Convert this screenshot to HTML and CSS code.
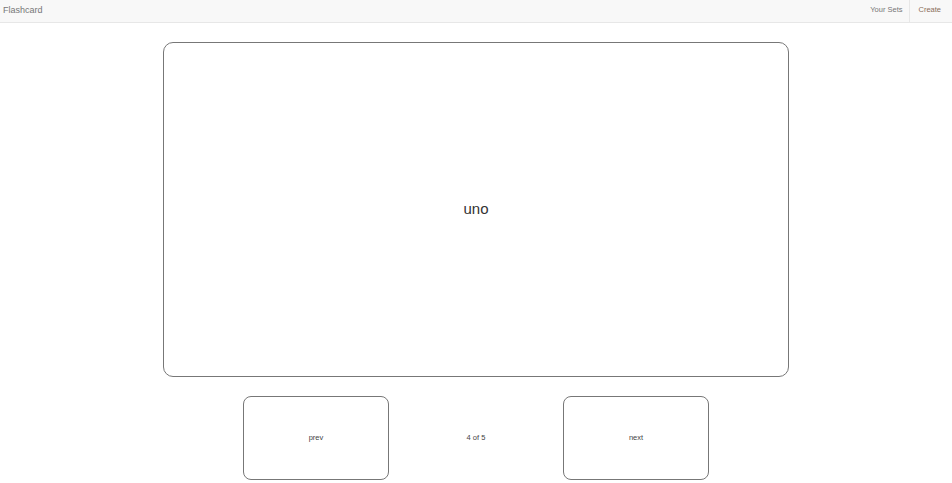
FILE: index.html
```html
<!DOCTYPE html>
<html>
<head>
<meta charset="utf-8">
<title>Flashcard</title>
<link rel="stylesheet" href="styles.css">
</head>
<body>
<nav class="navbar">
  <a class="brand" href="#">Flashcard</a>
  <ul class="nav">
    <li><a href="#">Your Sets</a></li>
    <li class="active"><a href="#">Create</a></li>
  </ul>
</nav>
<main class="main">
  <div class="card"><span class="word">uno</span></div>
  <div class="controls">
    <div class="cell"><button class="btn">prev</button></div>
    <div class="cell counter">4 of 5</div>
    <div class="cell"><button class="btn">next</button></div>
  </div>
</main>
</body>
</html>
```
FILE: styles.css
```css
* { box-sizing: border-box; }
html, body { margin: 0; padding: 0; background: #fff; }
body { font-family: "Liberation Sans", Arial, sans-serif; color: #333; }

.navbar {
  height: 23px;
  background: #f8f8f8;
  border-bottom: 1px solid #e7e7e7;
  display: flex;
  justify-content: space-between;
  align-items: stretch;
}
.brand {
  font-size: 9px;
  color: #777;
  text-decoration: none;
  padding: 0 0 0 3px;
  line-height: 20px;
}
.nav {
  list-style: none;
  margin: 0;
  padding: 0;
  display: flex;
}
.nav li a {
  display: block;
  font-size: 7.5px;
  color: #777;
  text-decoration: none;
  line-height: 20px;
  padding: 0 7px;
  height: 22px;
}
.nav li.active a {
  border-left: 1px solid #e7e7e7;
  color: #8a6d5a;
  padding: 0 11px 0 8px;
}

.main {
  display: flex;
  flex-direction: column;
  align-items: center;
  padding-top: 19px;
}
.card {
  width: 626px;
  height: 335px;
  border: 1px solid #777;
  border-radius: 10px;
  display: flex;
  align-items: center;
  justify-content: center;
  padding-bottom: 2px;
}
.word {
  font-size: 15px;
  color: #333;
}
.controls {
  margin-top: 19px;
  display: grid;
  grid-template-columns: 160px 160px 160px;
}
.cell {
  display: flex;
  justify-content: center;
  align-items: center;
}
.counter {
  font-size: 7.5px;
  color: #444;
  padding-bottom: 2px;
}
.btn {
  width: 146px;
  height: 84px;
  background: #fff;
  border: 1px solid #777;
  border-radius: 8px;
  font-family: "Liberation Sans", Arial, sans-serif;
  font-size: 7.5px;
  color: #444;
  padding: 0 0 2px 0;
}
```
